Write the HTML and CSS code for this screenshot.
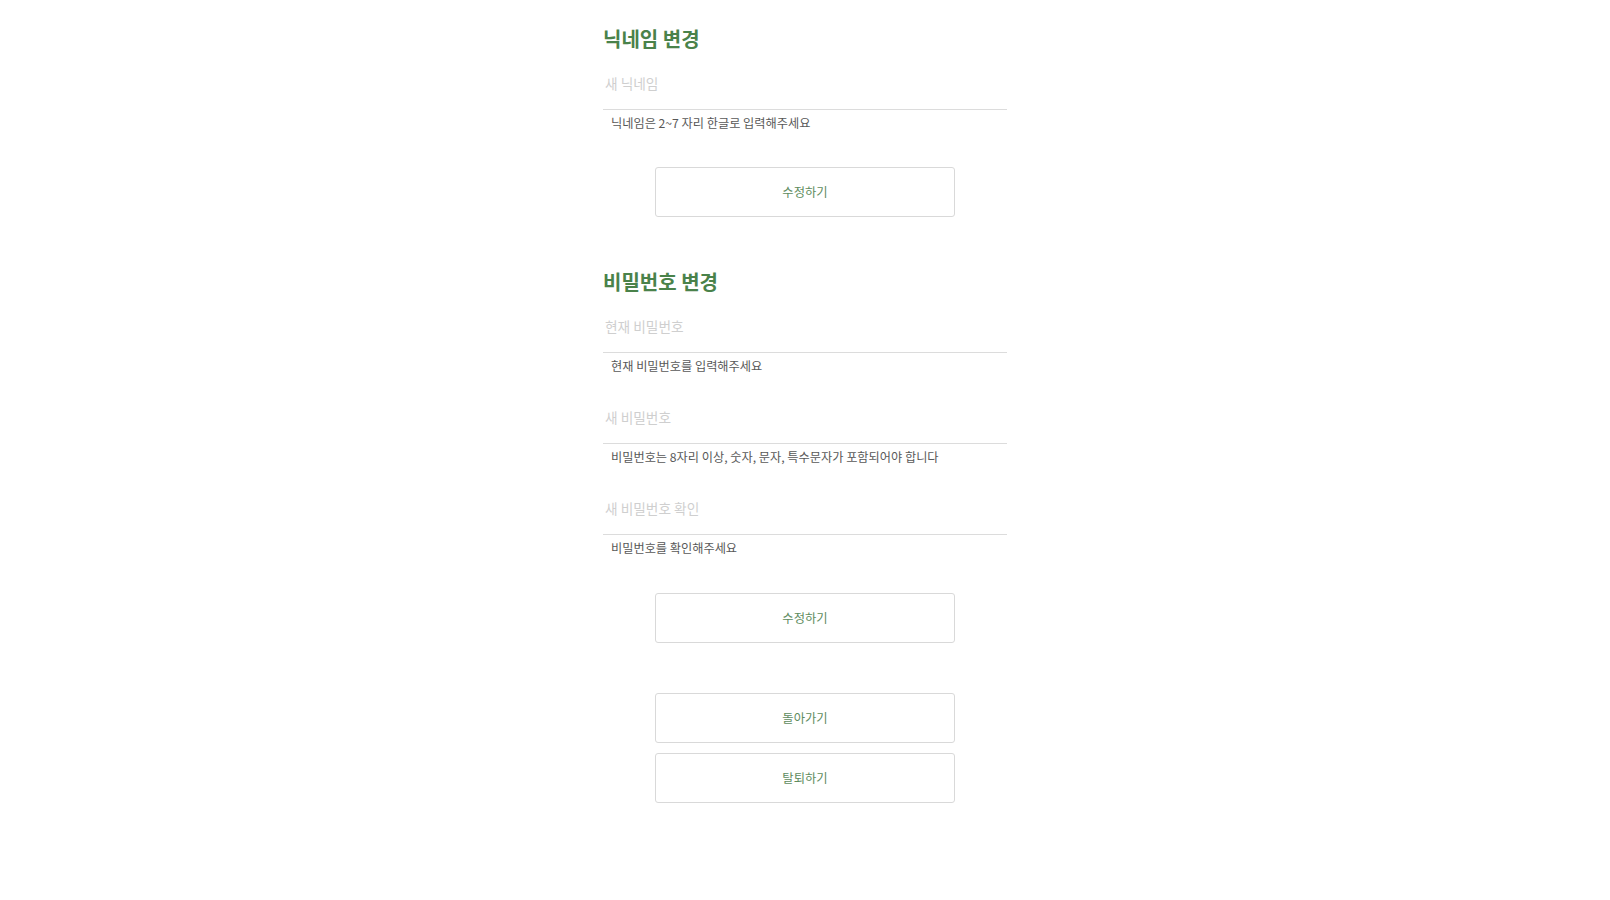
FILE: index.html
```html
<!DOCTYPE html>
<html>
<head>
    <meta charset="utf-8">
    <title>회원정보 수정</title>
    <link rel="stylesheet" href="styles.css">
</head>
<body>
    <div class="wrap">
        <section class="section">
            <h2 class="title">닉네임 변경</h2>
            <div class="field">
                <input class="input" type="text" placeholder="새 닉네임">
                <p class="help">닉네임은 2~7 자리 한글로 입력해주세요</p>
            </div>
            <button class="btn">수정하기</button>
        </section>

        <section class="section second">
            <h2 class="title">비밀번호 변경</h2>
            <div class="field">
                <input class="input" type="password" placeholder="현재 비밀번호">
                <p class="help">현재 비밀번호를 입력해주세요</p>
            </div>
            <div class="field">
                <input class="input" type="password" placeholder="새 비밀번호">
                <p class="help">비밀번호는 8자리 이상, 숫자, 문자, 특수문자가 포함되어야 합니다</p>
            </div>
            <div class="field">
                <input class="input" type="password" placeholder="새 비밀번호 확인">
                <p class="help">비밀번호를 확인해주세요</p>
            </div>
            <button class="btn">수정하기</button>
        </section>

        <div class="actions">
            <button class="btn">돌아가기</button>
            <button class="btn">탈퇴하기</button>
        </div>
    </div>
</body>
</html>
```

FILE: styles.css
```css
body {
    margin: 0;
    background-color: #fff;
    font-family: "Noto Sans CJK KR", "Noto Sans", sans-serif;
}

.wrap {
    width: 404px;
    margin: 0 auto;
    padding-top: 27px;
    padding-bottom: 60px;
}

.section {
    display: flex;
    flex-direction: column;
}

.section.second {
    margin-top: 53px;
}

.title {
    margin: 0 0 9px 0;
    font-size: 20px;
    line-height: 24px;
    font-weight: 700;
    color: #4a824a;
}

.field {
    display: flex;
    flex-direction: column;
}

.field + .field {
    margin-top: 18px;
}

.input {
    box-sizing: border-box;
    width: 100%;
    height: 50px;
    margin: 0;
    padding: 0 0 4px 2px;
    border: none;
    border-bottom: 1px solid #dcdcdc;
    outline: none;
    background: transparent;
    font-family: inherit;
    font-size: 13.7px;
    color: #333;
}

.input::placeholder {
    color: #cfcfcf;
}

.help {
    margin: 3px 0 0 0;
    padding-left: 8px;
    font-size: 12.2px;
    line-height: 20px;
    color: #585858;
}

.btn {
    box-sizing: border-box;
    display: block;
    width: 300px;
    height: 50px;
    margin: 34px auto 0;
    padding: 0;
    border: 1px solid #d9d9d9;
    border-radius: 3px;
    background-color: #fff;
    font-family: inherit;
    font-size: 12.3px;
    color: #5e8c5e;
    cursor: pointer;
}

.second .btn {
    margin-top: 35px;
}

.actions {
    display: flex;
    flex-direction: column;
    gap: 10px;
    margin-top: 50px;
}

.actions .btn {
    margin: 0 auto;
}
```
